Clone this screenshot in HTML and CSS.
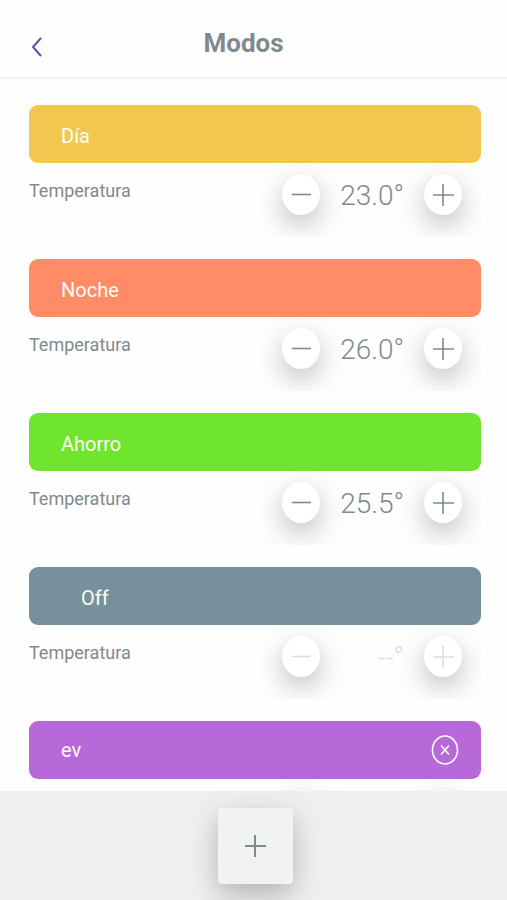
FILE: index.html
```html
<!DOCTYPE html>
<html lang="es">

<head>
	<meta charset="UTF-8">
	<meta name="viewport" content="width=device-width, initial-scale=1.0">
	<title>Modos</title>
	<link rel="stylesheet" href="styles.css">
</head>

<body>
	<svg class="sprite" aria-hidden="true">
		<symbol id="icon-minus" viewBox="0 0 22 22">
			<path d="M2 10.5h19" />
		</symbol>
		<symbol id="icon-plus" viewBox="0 0 22 22">
			<path d="M1 11h21M11 0v22" />
		</symbol>
	</svg>

	<header class="header">
		<button type="button" class="back-btn" aria-label="Volver">
			<svg viewBox="0 0 12 22"><path d="M10 2L2 11l8 9" /></svg>
		</button>
		<h1>Modos</h1>
	</header>

	<main class="modes">
		<section class="mode">
			<h2 class="mode-name day">Día</h2>
			<div class="mode-row">
				<span class="label">Temperatura</span>
				<div class="controls">
					<button type="button" class="round-btn" aria-label="Bajar"><svg><use href="#icon-minus" /></svg></button>
					<output class="value">23.0°</output>
					<button type="button" class="round-btn" aria-label="Subir"><svg><use href="#icon-plus" /></svg></button>
				</div>
			</div>
		</section>

		<section class="mode">
			<h2 class="mode-name night">Noche</h2>
			<div class="mode-row">
				<span class="label">Temperatura</span>
				<div class="controls">
					<button type="button" class="round-btn" aria-label="Bajar"><svg><use href="#icon-minus" /></svg></button>
					<output class="value">26.0°</output>
					<button type="button" class="round-btn" aria-label="Subir"><svg><use href="#icon-plus" /></svg></button>
				</div>
			</div>
		</section>

		<section class="mode">
			<h2 class="mode-name saving">Ahorro</h2>
			<div class="mode-row">
				<span class="label">Temperatura</span>
				<div class="controls">
					<button type="button" class="round-btn" aria-label="Bajar"><svg><use href="#icon-minus" /></svg></button>
					<output class="value">25.5°</output>
					<button type="button" class="round-btn" aria-label="Subir"><svg><use href="#icon-plus" /></svg></button>
				</div>
			</div>
		</section>

		<section class="mode">
			<h2 class="mode-name off">Off</h2>
			<div class="mode-row">
				<span class="label">Temperatura</span>
				<div class="controls disabled">
					<button type="button" class="round-btn" aria-label="Bajar" disabled><svg><use href="#icon-minus" /></svg></button>
					<output class="value">--°</output>
					<button type="button" class="round-btn" aria-label="Subir" disabled><svg><use href="#icon-plus" /></svg></button>
				</div>
			</div>
		</section>

		<section class="mode">
			<div class="mode-name custom">
				<h2>ev</h2>
				<button type="button" class="delete-btn" aria-label="Eliminar">
					<svg viewBox="0 0 28 30">
						<ellipse cx="14" cy="15" rx="12.5" ry="14" />
						<path d="M10 10.5l8 9M18 10.5l-8 9" />
					</svg>
				</button>
			</div>
			<div class="mode-row">
				<div class="controls">
					<button type="button" class="round-btn" aria-label="Bajar"><svg><use href="#icon-minus" /></svg></button>
					<button type="button" class="round-btn" aria-label="Subir"><svg><use href="#icon-plus" /></svg></button>
				</div>
			</div>
		</section>
	</main>

	<footer class="footer">
		<button type="button" class="add-btn" aria-label="Agregar modo"><svg><use href="#icon-plus" /></svg></button>
	</footer>
</body>

</html>
```
FILE: styles.css
```css
* {
	box-sizing: border-box;
}

body {
	font-family: Roboto, sans-serif;
	background-color: #fefefe;
	color: #7f8a8f;
	display: flex;
	flex-direction: column;
	height: 100vh;
	margin: 0;
}

h1,
h2 {
	margin: 0;
}

button {
	display: flex;
	align-items: center;
	justify-content: center;
	padding: 0;
	border: none;
	background: none;
	color: inherit;
	cursor: pointer;
}

svg {
	display: block;
	fill: none;
	stroke: currentColor;
	stroke-width: 2;
}

.sprite {
	display: none;
}

.header {
	display: grid;
	grid-template-columns: 1fr auto 1fr;
	align-items: center;
	flex: none;
	height: 79px;
	padding: 8px 48px 0 28px;
	border-bottom: 2px solid #f3f3f3;
}

.header h1 {
	font-size: 26px;
	line-height: 30px;
	font-weight: 700;
}

.back-btn {
	justify-self: start;
	width: 18px;
	height: 30px;
	margin-top: 8px;
	color: #5552b0;
}

.back-btn svg {
	width: 12px;
	height: 22px;
}

.modes {
	flex: 1;
	min-height: 0;
	overflow: hidden;
	display: flex;
	flex-direction: column;
	gap: 22px;
	padding: 26px 26px 0 29px;
}

.mode {
	flex: none;
}

.mode-name {
	display: flex;
	align-items: center;
	justify-content: space-between;
	height: 58px;
	padding: 4px 22px 0 32px;
	border-radius: 9px;
	color: #fffdf5;
}

h2 {
	font-size: 20px;
	line-height: 26px;
	font-weight: 400;
}

.day {
	background-color: #f2c74f;
}

.night {
	background-color: #ff8c66;
}

.saving {
	background-color: #6fe52d;
}

.off {
	background-color: #78909c;
	padding-left: 52px;
}

.custom {
	background-color: #b869d9;
	padding-top: 0;
}

.delete-btn svg {
	width: 28px;
	height: 30px;
	stroke-width: 1.6;
}

.mode-row {
	display: flex;
	justify-content: space-between;
	height: 74px;
}

.label {
	padding-top: 16px;
	font-size: 18px;
	line-height: 24px;
}

/* the shadows are cut off at the edges of this box */
.controls {
	display: flex;
	align-items: flex-start;
	justify-content: space-between;
	width: 220px;
	margin-left: auto;
	padding: 11px 19px 0 21px;
	overflow: hidden;
}

.round-btn {
	flex: none;
	width: 38px;
	height: 41px;
	border-radius: 50%;
	background-color: #fff;
	box-shadow: 0 10px 28px rgba(0, 0, 0, 0.26);
}

.round-btn svg {
	width: 22px;
	height: 22px;
	stroke-width: 1.6;
}

.value {
	flex: 1;
	padding-right: 20px;
	text-align: right;
	font-size: 28px;
	font-weight: 300;
	line-height: 43px;
}

.disabled {
	color: #dcdcdc;
}

.footer {
	display: flex;
	justify-content: center;
	flex: none;
	padding: 17px 26px 16px 29px;
	background-color: #efefef;
	overflow: hidden;
}

.add-btn {
	width: 75px;
	height: 76px;
	border-radius: 4px;
	background-color: #f1f2f2;
	box-shadow: 0 10px 28px rgba(0, 0, 0, 0.26);
}

.add-btn svg {
	width: 22px;
	height: 22px;
}
```
